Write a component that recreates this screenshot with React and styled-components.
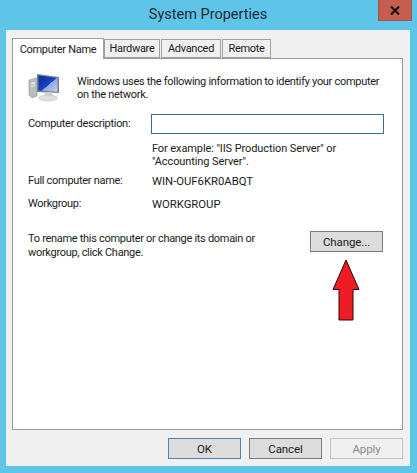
import styled, { createGlobalStyle } from 'styled-components';

const Global = createGlobalStyle`
html, body { margin:0; padding:0; }
body { width:417px; height:473px; overflow:hidden; background:#5ec5e8; }
* { box-sizing:border-box; }
`
const Frame = styled.div`
position:relative;
width:417px;
height:473px;
padding:0 7px 7px 6px;
display:flex;
flex-direction:column;
background:#5ec5e8;
font-family:Roboto,"Liberation Sans",sans-serif;
font-size:11px;
letter-spacing:-0.3px;
color:#1a1a1a;
`
const TitleBar = styled.div`
height:30px;
flex:none;
display:flex;
align-items:center;
justify-content:center;
padding-bottom:2px;
font-size:14.5px;
letter-spacing:0;
color:#1c2b36;
`
const Close = styled.div`
position:absolute;
top:0;
right:5px;
width:34px;
height:21px;
background:#c75c50;
border:1px solid #8a5f58;
border-top:none;
display:flex;
align-items:center;
justify-content:center;
`
const Body = styled.div`
flex:1;
background:#f0f0f0;
padding:7px 7px 0 6px;
display:flex;
flex-direction:column;
`
const TabRow = styled.div`
height:21px;
display:flex;
align-items:flex-end;
position:relative;
z-index:1;
flex:none;
`
const Tab = styled.div`
height:${p => p.$active ? '21px' : '19px'};
width:${p => p.$w}px;
margin-right:${p => p.$gap || 0}px;
margin-bottom:${p => p.$active ? '-1px' : '0'};
background:${p => p.$active ? '#fff' : '#f0f0f0'};
border:1px solid #a0a0a0;
border-bottom:${p => p.$active ? 'none' : '1px solid #a0a0a0'};
display:flex;
align-items:center;
justify-content:center;
`
const Pane = styled.div`
height:372px;
flex:none;
background:#fff;
border:1px solid #9a9a9a;
padding:14px 18px 0 15px;
display:flex;
flex-direction:column;
`
const Intro = styled.div`
display:flex;
gap:17px;
align-items:flex-start;
height:41px;
svg { flex:none; margin-top:1px; }
`
const IntroText = styled.div`
line-height:13px;
padding-top:2px;
white-space:nowrap;
`
const Row = styled.div`
display:flex;
align-items:center;
height:${p => p.$h}px;
margin-top:${p => p.$mt || 0}px;
`
const Label = styled.div`
width:123px;
flex:none;
padding-bottom:1px;
`
const Value = styled.span`
font-size:11.3px;
letter-spacing:0;
margin-left:1px;
`
const Input = styled.input`
width:233px;
height:20px;
border:1px solid #3c6d8f;
background:#fff;
outline:none;
`
const Hint = styled.div`
margin:8px 0 0 124px;
line-height:13px;
letter-spacing:-0.1px;
`
const Rename = styled.div`
display:flex;
justify-content:space-between;
height:21px;
padding-right:1px;
margin-top:20px;
`
const RenameText = styled.div`
line-height:13.5px;
padding-top:1px;
width:270px;
`
const Button = styled.button`
width:73px;
height:21px;
padding:0;
font:inherit;
font-size:11.5px;
letter-spacing:-0.1px;
color:${p => p.$off ? '#8a8a8a' : '#1a1a1a'};
background:${p => p.$off ? '#f0f0f0' : '#dcdcdc'};
border:1px solid ${p => p.$off ? '#c4c4c4' : p.$primary ? '#4f84ab' : '#7c7c7c'};
`
const ArrowBox = styled.div`
display:flex;
justify-content:flex-end;
padding-right:24px;
margin-top:7px;
`
const Footer = styled.div`
display:flex;
justify-content:flex-end;
gap:8px;
padding-top:8px;
`

const MonitorIcon = () => (
  <svg width="32" height="28" viewBox="0 0 32 28">
    <defs>
      <linearGradient id="scr" x1="0" y1="0" x2="1" y2="1">
        <stop offset="0" stopColor="#0a2a9c" />
        <stop offset="0.55" stopColor="#1846c4" />
        <stop offset="0.56" stopColor="#8fa8e4" />
        <stop offset="1" stopColor="#c4d0ee" />
      </linearGradient>
    </defs>
    <path d="M1 6l8-2v18l-5 2-3-3z" fill="#b9bec2" stroke="#8b9296" strokeWidth=".6" />
    <path d="M3 9l4-1v1.500l-4 1zM3 12l4-1v1l-4 1z" fill="#eef1f2" />
    <path d="M9 0l22 3v16L9 18z" fill="#74828e" />
    <path d="M10.500 1.500l19 2.600v13.600L10.500 16.500z" fill="url(#scr)" />
    <path d="M17 18.500h7l1 4h-9z" fill="#cfd3d6" />
    <ellipse cx="20" cy="24" rx="9.500" ry="3" fill="#dcdfe1" stroke="#b4b9bc" strokeWidth=".5" />
  </svg>
)

const RedArrow = () => (
  <svg width="28" height="62" viewBox="0 0 28 62">
    <path d="M14 1L27 30.500H21V61H7V30.500H1z" fill="#ee1c25" stroke="#2a0508" strokeWidth="1" />
  </svg>
)

const App = () => {
  return <Frame>
    <Global />
    <TitleBar>System Properties</TitleBar>
    <Close>
      <svg width="10" height="9" viewBox="0 0 10 9">
        <path d="M1 0.500L9 8.500M9 0.500L1 8.500" stroke="#1b1010" strokeWidth="2.200" />
      </svg>
    </Close>
    <Body>
      <TabRow>
        <Tab $active $w={92}>Computer Name</Tab>
        <Tab $w={56} $gap={1}>Hardware</Tab>
        <Tab $w={60} $gap={1}>Advanced</Tab>
        <Tab $w={49}>Remote</Tab>
      </TabRow>
      <Pane>
        <Intro>
          <MonitorIcon />
          <IntroText>Windows uses the following information to identify your computer<br />on the network.</IntroText>
        </Intro>
        <Row $h={20}>
          <Label>Computer description:</Label>
          <Input />
        </Row>
        <Hint>For example: "IIS Production Server" or<br />"Accounting Server".</Hint>
        <Row $h={14} $mt={6}>
          <Label>Full computer name:</Label>
          <Value>WIN-OUF6KR0ABQT</Value>
        </Row>
        <Row $h={14} $mt={9}>
          <Label>Workgroup:</Label>
          <Value>WORKGROUP</Value>
        </Row>
        <Rename>
          <RenameText>To rename this computer or change its domain or<br />workgroup, click Change.</RenameText>
          <Button>Change...</Button>
        </Rename>
        <ArrowBox><RedArrow /></ArrowBox>
      </Pane>
      <Footer>
        <Button $primary>OK</Button>
        <Button>Cancel</Button>
        <Button $off>Apply</Button>
      </Footer>
    </Body>
  </Frame>
}

export default App;
